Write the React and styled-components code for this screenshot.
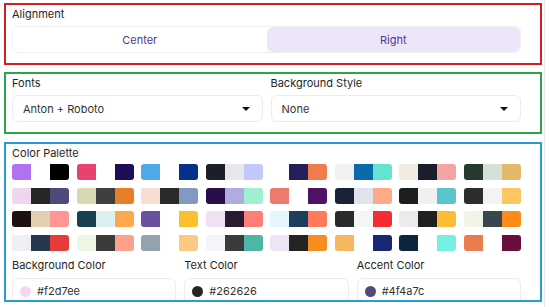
import styled, { createGlobalStyle } from "styled-components";

const GlobalStyle = createGlobalStyle`
    body {
        margin: 0;
        background: #fff;
        font-family: Inter, "Noto Sans", sans-serif;
    }
`;

const Page = styled.div`
    width: 544px;
    height: 307px;
    border-right: 1px solid #e6e6e6;
    overflow: hidden;
    padding-top: 3px;
    box-sizing: content-box;
`;

const Section = styled.div`
    box-sizing: border-box;
    width: 538px;
    height: ${p => p.h}px;
    margin: ${p => p.mt}px 0 0 4px;
    border: 2px solid ${p => p.color};
    padding: 3px 19px 0 6px;
    overflow: hidden;
`;

const Label = styled.div`
    font-size: 11px;
    line-height: 13px;
    color: #262626;
    margin-bottom: ${p => p.mb ?? 5}px;
`;

const Segmented = styled.div`
    display: grid;
    grid-template-columns: 1fr 1fr;
    height: 27px;
    border: 1px solid #efefef;
    border-radius: 6px;
    box-sizing: border-box;
    overflow: hidden;
`;

const Segment = styled.div`
    display: flex;
    align-items: center;
    justify-content: center;
    font-size: 11px;
    color: #4b3b8f;
    background: ${p => p.active ? "#ede6fb" : "#fff"};
    border-radius: ${p => p.active ? "6px" : "0"};
`;

const Row = styled.div`
    display: grid;
    grid-template-columns: repeat(${p => p.cols}, 1fr);
    column-gap: 8px;
`;

const Field = styled.div``;

const Select = styled.div`
    height: 27px;
    box-sizing: border-box;
    border: 1px solid #ececec;
    border-radius: 6px;
    display: flex;
    align-items: center;
    justify-content: space-between;
    padding: 0 10px 0 10px;
    font-size: 11px;
    color: #333;
`;

const Caret = styled.span`
    width: 0;
    height: 0;
    border-left: 4px solid transparent;
    border-right: 4px solid transparent;
    border-top: 4px solid #111;
    margin-right: 2px;
`;

const PaletteGrid = styled.div`
    display: grid;
    grid-template-columns: repeat(8, 57px);
    justify-content: space-between;
    row-gap: 7.5px;
    margin-bottom: 8px;
`;

const Swatch = styled.div`
    display: flex;
    height: 16px;
    border-radius: 3px;
    overflow: hidden;
    span {
        flex: 1;
    }
`;

const ColorInput = styled.div`
    height: 27px;
    box-sizing: border-box;
    border: 1px solid #ececec;
    border-radius: 6px;
    display: flex;
    align-items: center;
    gap: 6px;
    padding-left: 7px;
    font-size: 11px;
    color: #333;
`;

const Dot = styled.span`
    width: 11px;
    height: 11px;
    border-radius: 50%;
    background: ${p => p.c};
`;

const palettes = [
    ["#b072f0", "#ffffff", "#000000"],
    ["#e8436e", "#ffffff", "#1e0e55"],
    ["#4ea8ea", "#ffffff", "#05318a"],
    ["#1a1f2b", "#e5e7eb", "#c3c8fb"],
    ["#ffffff", "#24205a", "#ef7b4f"],
    ["#f3f0f0", "#0a6aaa", "#67e3d2"],
    ["#f0ebde", "#1a1d2b", "#f5a4a4"],
    ["#283a2e", "#d3e0d8", "#e2b96b"],

    ["#eed6ec", "#262626", "#4f4a7c"],
    ["#d8d8b4", "#3f3f3f", "#e87d27"],
    ["#f8ddd3", "#2a2a2a", "#8399c4"],
    ["#2a0e4a", "#b0acdf", "#9ff0d0"],
    ["#ee7a6e", "#ffffff", "#4f1265"],
    ["#182338", "#e0e2ec", "#fea98a"],
    ["#1e1e1e", "#f0f0f0", "#57c5cb"],
    ["#2d2d2d", "#f3f3f3", "#fcc665"],

    ["#1e1110", "#e4d0b0", "#fe9793"],
    ["#17414f", "#ddf0f0", "#fda84c"],
    ["#6a4f9e", "#ffffff", "#fbc02e"],
    ["#efe0f3", "#2a1b31", "#fe7f7a"],
    ["#e5f4fd", "#1e3e5e", "#fe7a5a"],
    ["#2a2a2a", "#f5f5f5", "#f52b35"],
    ["#ebebee", "#202020", "#fcbd35"],
    ["#f0f5e8", "#37474f", "#fe8b19"],

    ["#eef0f4", "#27384e", "#e63b3b"],
    ["#eef5e5", "#3b3b3b", "#fca18b"],
    ["#93a2ab", "#ffffff", "#fdc881"],
    ["#f5f4f8", "#3a3a3a", "#4db6a6"],
    ["#ebe5f5", "#242424", "#f98c20"],
    ["#f5b862", "#ffffff", "#1a2676"],
    ["#0b2540", "#ffffff", "#75efe4"],
    ["#eb7c4e", "#ffffff", "#6a0d3f"],
];

const colors = [
    { label: "Background Color", value: "#f2d7ee" },
    { label: "Text Color", value: "#262626" },
    { label: "Accent Color", value: "#4f4a7c" },
];

export default function App() {
    return (
        <>
            <GlobalStyle />
            <Page>
                <Section color="#d21f26" h={62} mt={0}>
                    <Label>Alignment</Label>
                    <Segmented>
                        <Segment>Center</Segment>
                        <Segment active>Right</Segment>
                    </Segmented>
                </Section>

                <Section color="#2ca44a" h={62} mt={7}>
                    <Row cols={2}>
                        <Field>
                            <Label>Fonts</Label>
                            <Select>Anton + Roboto<Caret /></Select>
                        </Field>
                        <Field>
                            <Label>Background Style</Label>
                            <Select>None<Caret /></Select>
                        </Field>
                    </Row>
                </Section>

                <Section color="#2a9ad8" h={160} mt={8}>
                    <Label mb={4}>Color Palette</Label>
                    <PaletteGrid>
                        {palettes.map((p, i) => (
                            <Swatch key={i}>
                                {p.map((c, j) => <span key={j} style={{ background: c }} />)}
                            </Swatch>
                        ))}
                    </PaletteGrid>
                    <Row cols={3}>
                        {colors.map(c => (
                            <Field key={c.label}>
                                <Label mb={6}>{c.label}</Label>
                                <ColorInput>
                                    <Dot c={c.value} />
                                    {c.value}
                                </ColorInput>
                            </Field>
                        ))}
                    </Row>
                </Section>
            </Page>
        </>
    );
}
